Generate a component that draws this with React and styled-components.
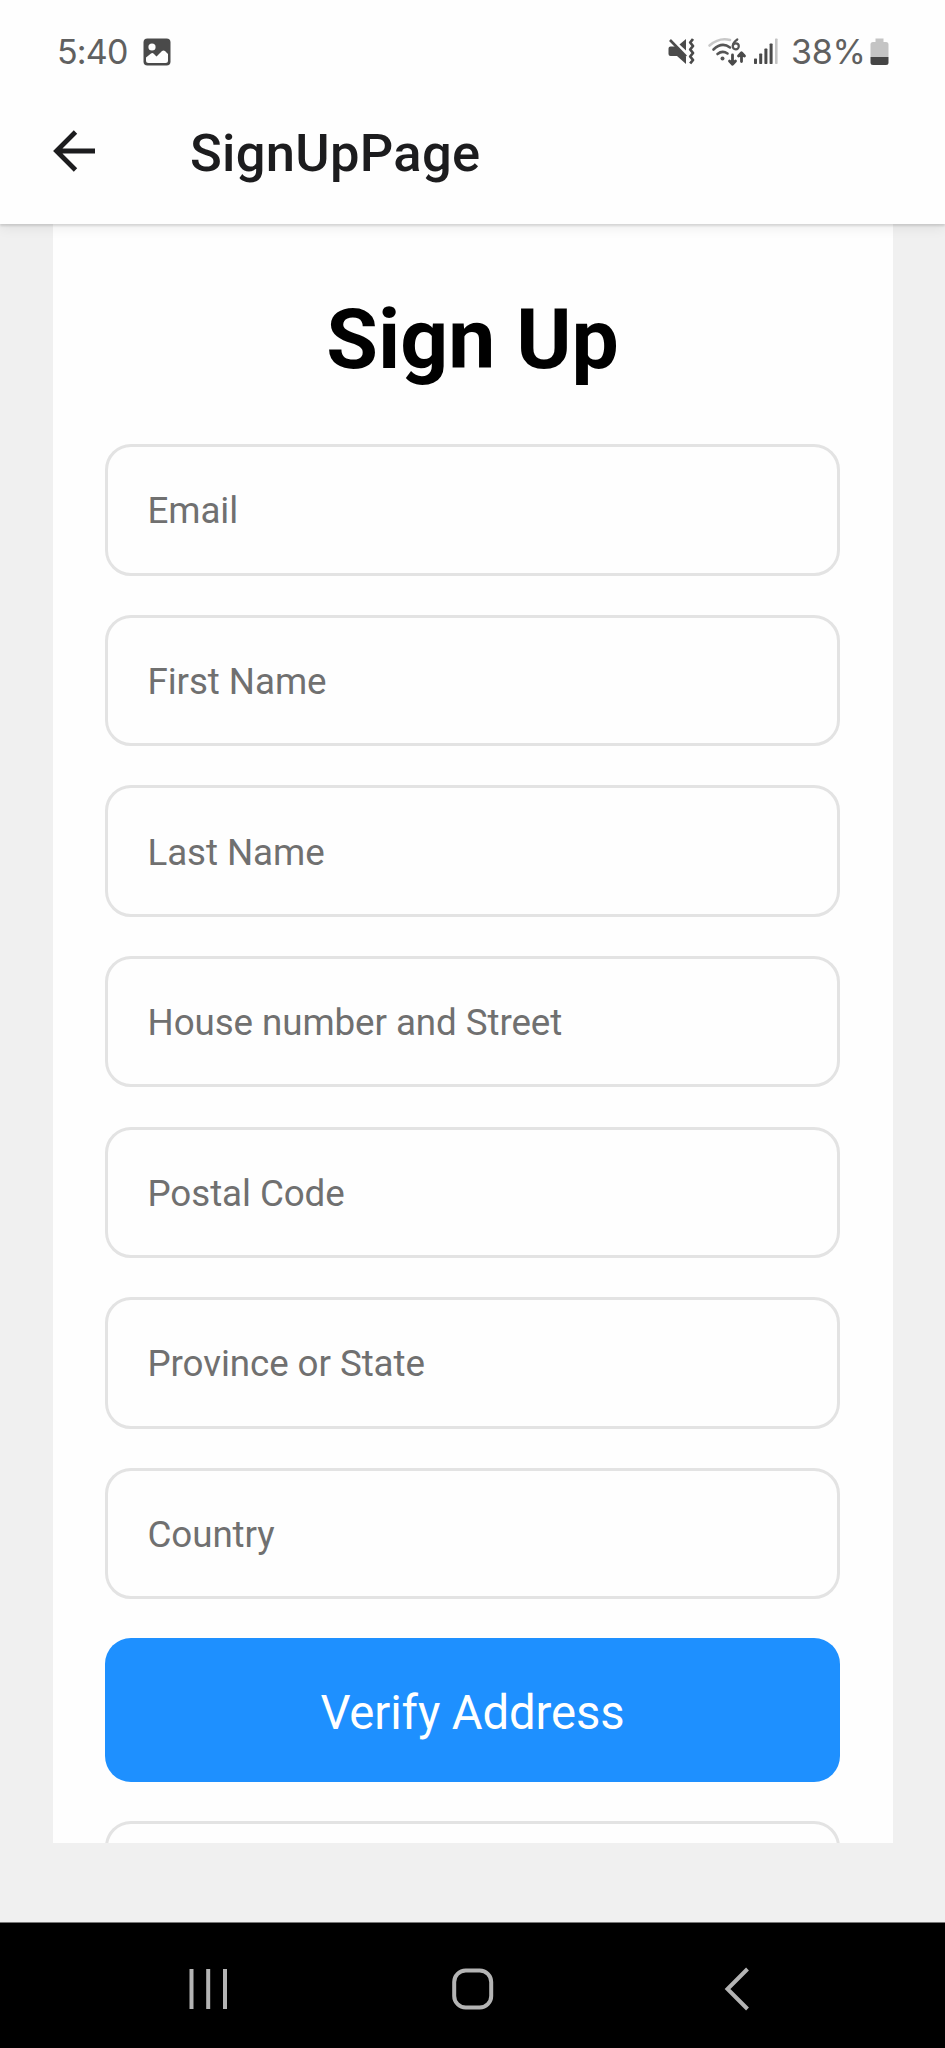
import React from "react";
import styled, { createGlobalStyle } from "styled-components";

const GlobalStyle = createGlobalStyle`
  *, *::before, *::after { box-sizing: border-box; }
  body { margin: 0; background: #f0f0f0; font-family: Roboto, "Liberation Sans", sans-serif; }
`;

const Screen = styled.div`
  display: flex;
  flex-direction: column;
  width: 945px;
  height: 2048px;
  overflow: hidden;
  background: #f0f0f0;
`;

const Header = styled.header`
  position: relative;
  z-index: 1;
  flex: none;
  height: 224px;
  background: #fefefe;
  box-shadow: 0 2px 2px rgba(0, 0, 0, 0.12), 0 4px 12px rgba(0, 0, 0, 0.07);
`;

const StatusBar = styled.div`
  display: flex;
  align-items: center;
  justify-content: space-between;
  height: 80px;
  padding: 23px 56.5px 0 57px;
`;

const StatusGroup = styled.div`
  display: flex;
  align-items: center;
  gap: ${(p) => p.$gap}px;
`;

const StatusText = styled.span`
  font-family: Inter, Roboto, sans-serif;
  font-size: 34px;
  line-height: 40px;
  color: #606060;
  letter-spacing: ${(p) => p.$spacing || 0}px;
`;

const Icon = styled.svg`
  display: block;
  flex: none;
  overflow: visible;
`;

const Toolbar = styled.div`
  display: flex;
  align-items: center;
  height: 144px;
  padding-left: 53px;
  gap: 95px;
`;

const BackButton = styled.button`
  width: 42px;
  height: 42px;
  padding: 0;
  border: 0;
  background: none;
  transform: translateY(-1px);
`;

const PageTitle = styled.div`
  font-size: 52.5px;
  font-weight: 500;
  line-height: 62px;
  letter-spacing: 0.3px;
  color: #1c1c1e;
  padding-top: 1px;
`;

const Content = styled.main`
  flex: none;
  height: 1697.5px;
  padding: 0 52.5px 78.5px;
`;

const Card = styled.form`
  height: 100%;
  padding: 67px 52.5px 0;
  overflow: hidden;
  background: #fefefe;
`;

const Heading = styled.h1`
  margin: 0 0 55.3px;
  font-size: 84px;
  font-weight: 700;
  line-height: 98px;
  text-align: center;
  color: #000;
`;

const Fields = styled.div`
  display: flex;
  flex-direction: column;
  gap: 39.3px;
`;

const Field = styled.input`
  display: block;
  flex: none;
  width: 100%;
  height: 131.3px;
  padding: 2px 39.5px 0;
  border: 3px solid #e3e3e3;
  border-radius: 26px;
  background: transparent;
  font-family: Roboto, sans-serif;
  font-size: 36.75px;
  letter-spacing: -0.08px;
  outline: none;
  &::placeholder { color: #707070; opacity: 1; }
`;

const PrimaryButton = styled.button`
  flex: none;
  height: 143.4px;
  padding: 6px 0 0;
  border: 0;
  border-radius: 26px;
  background: #1e90ff;
  color: #fff;
  font-family: Roboto, sans-serif;
  font-size: 47.25px;
  letter-spacing: -0.1px;
`;

const NavBar = styled.nav`
  display: grid;
  grid-template-columns: repeat(3, 265px);
  flex: 1;
  align-items: center;
  justify-content: center;
  justify-items: center;
  padding-top: 7px;
  border-top: 1px solid #777;
  background: #000;
`;

const PLACEHOLDERS = [
  "Email",
  "First Name",
  "Last Name",
  "House number and Street",
  "Postal Code",
  "Province or State",
  "Country",
];

const PictureIcon = () => (
  <Icon width="28" height="28" viewBox="0 0 28 28">
    <rect x="0.5" y="0.5" width="27" height="27" rx="4" fill="#4a4a4a" />
    <circle cx="9" cy="9" r="3.6" fill="#fefefe" />
    <path d="M3 19.5 L8 15.5 Q9.5 14.5 11 16 L13.5 18.5 L19 13 Q20.5 11.8 22 13 L25 16 V22.5 Q25 25 22.5 25 H5.5 Q3 25 3 22.5 Z" fill="#fefefe" />
  </Icon>
);

const MuteIcon = () => (
  <Icon width="27" height="27" viewBox="0 0 27 27">
    <path d="M0.5 10.5 Q0.5 8.5 2.5 8.5 H7.5 L18 19 V26 L9 18 H2.5 Q0.5 18 0.5 16 Z" fill="#4a4a4a" />
    <path d="M2 2 L18 18.5" stroke="#4a4a4a" strokeWidth="2.6" />
    <path d="M18 1 V12.5 L11.5 6.5 Z" fill="#4a4a4a" />
    <path d="M25 1 L22.2 4.5 L25 8 L22.2 11.5 L25 15 L22.2 18.5 L25 22 L22.2 25.5" fill="none" stroke="#4a4a4a" strokeWidth="2.8" strokeLinejoin="round" />
  </Icon>
);

const WifiIcon = () => (
  <Icon width="38" height="28" viewBox="0 0 38 28" fill="none" strokeLinecap="round">
    <path d="M1.5 7.5 Q11.5 -1 22 2" stroke="#c8c8c8" strokeWidth="2.6" />
    <path d="M5.5 11.5 Q14 3.5 22 9.5" stroke="#555" strokeWidth="2.6" />
    <path d="M9.5 16 Q14.5 12 19.5 15.5" stroke="#555" strokeWidth="2.6" />
    <circle cx="14.5" cy="20.5" r="2" fill="#555" />
    <path d="M29.3 1.5 Q25 4.5 24.8 8" stroke="#555" strokeWidth="2.2" />
    <circle cx="27.8" cy="8.3" r="3" stroke="#555" strokeWidth="2.2" />
    <path d="M24.5 17 V26 M21.5 23 L24.5 26.3 L27.5 23" stroke="#4a4a4a" strokeWidth="2.8" strokeLinejoin="round" />
    <path d="M33.5 23.5 V15 M30.5 18 L33.5 14.8 L36.5 18" stroke="#4a4a4a" strokeWidth="2.8" strokeLinejoin="round" />
  </Icon>
);

const SignalIcon = () => (
  <Icon width="24" height="27" viewBox="0 0 24 27" fill="#4a4a4a">
    <rect x="0" y="20.5" width="3" height="5.5" rx="0.7" />
    <rect x="5.2" y="15.5" width="3" height="10.5" rx="0.7" />
    <rect x="10.4" y="10.5" width="3" height="15.5" rx="0.7" />
    <rect x="15.6" y="5.5" width="3" height="20.5" rx="0.7" />
    <rect x="21" y="0.5" width="2.6" height="25.5" rx="0.7" fill="#c4c4c4" />
  </Icon>
);

const BatteryIcon = () => (
  <Icon width="19" height="28" viewBox="0 0 19 28">
    <path d="M5.5 0.5 H13.5 V4 H16 Q18.5 4 18.5 6.5 V19 H0.5 V6.5 Q0.5 4 3 4 H5.5 Z" fill="#c4c4c4" />
    <path d="M0.5 19 H18.5 V24.5 Q18.5 27 16 27 H3 Q0.5 27 0.5 24.5 Z" fill="#454545" />
  </Icon>
);

export default function App() {
  return (
    <>
      <GlobalStyle />
      <Screen>
        <Header>
          <StatusBar>
            <StatusGroup $gap={15}>
              <StatusText $spacing={-0.8}>5:40</StatusText>
              <PictureIcon />
            </StatusGroup>
            <StatusGroup $gap={13}>
              <MuteIcon />
              <StatusGroup $gap={8}>
                <WifiIcon />
                <SignalIcon />
              </StatusGroup>
              <StatusGroup $gap={4}>
                <StatusText $spacing={-0.3}>38%</StatusText>
                <BatteryIcon />
              </StatusGroup>
            </StatusGroup>
          </StatusBar>
          <Toolbar>
            <BackButton type="button" aria-label="Back">
              <Icon width="42" height="42" viewBox="0 0 42 42" fill="none" stroke="#1c1c1e" strokeWidth="4.8">
                <path d="M42 21 H4 M22.5 2 L3.5 21 L22.5 40" />
              </Icon>
            </BackButton>
            <PageTitle>SignUpPage</PageTitle>
          </Toolbar>
        </Header>
        <Content>
          <Card>
            <Heading>Sign Up</Heading>
            <Fields>
              {PLACEHOLDERS.map((label) => (
                <Field key={label} placeholder={label} />
              ))}
              <PrimaryButton type="button">Verify Address</PrimaryButton>
              <Field aria-label="Verification result" />
            </Fields>
          </Card>
        </Content>
        <NavBar>
          <Icon width="42" height="42" viewBox="0 0 42 42" stroke="#b4b4b4" strokeWidth="4">
            <path d="M4.5 1 V41 M21.2 1 V41 M38 1 V41" />
          </Icon>
          <Icon width="42" height="42" viewBox="0 0 42 42" fill="none" stroke="#b4b4b4" strokeWidth="4">
            <rect x="2.2" y="2.5" width="37" height="37" rx="11.5" />
          </Icon>
          <Icon width="26" height="42" viewBox="0 0 26 42" fill="none" stroke="#b4b4b4" strokeWidth="4">
            <path d="M22.5 1 L2.5 21 L22.5 41" />
          </Icon>
        </NavBar>
      </Screen>
    </>
  );
}
